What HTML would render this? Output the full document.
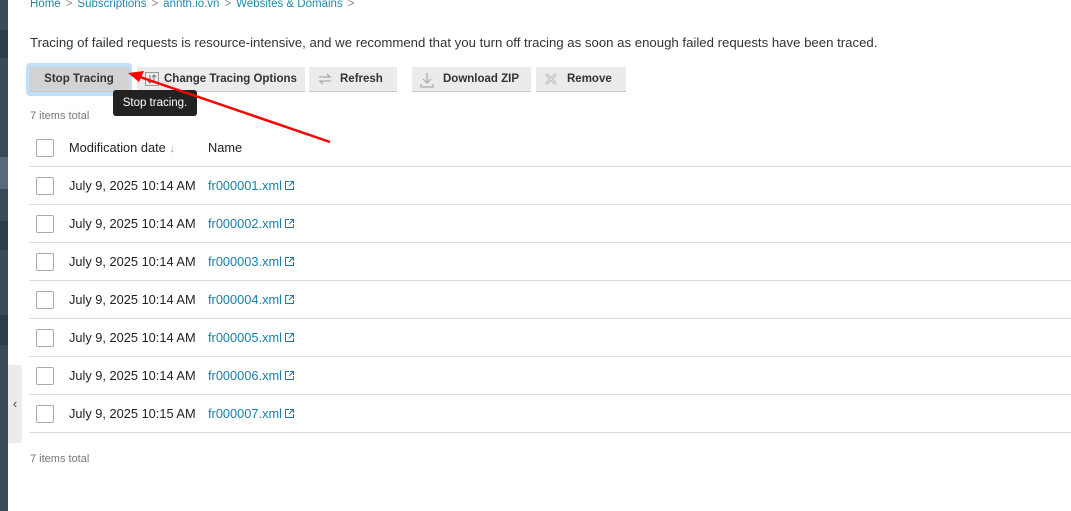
<!DOCTYPE html>
<html><head><meta charset="utf-8"><style>
*{margin:0;padding:0;box-sizing:border-box}
body{width:1071px;height:511px;overflow:hidden;background:#fff;font-family:"Liberation Sans",sans-serif;color:#222;position:relative}
.a{position:absolute;white-space:nowrap}
.sb{position:absolute;left:0;width:8px}
.bc{top:-2px;left:30px;font-size:11.5px;color:#28a;}
.bc span{color:#888;margin:0 5px}
.btn{position:absolute;top:67px;height:25px;background:#ebebeb;border-bottom:1px solid #c8c8c8;font-size:11.5px;font-weight:bold;color:#333;line-height:25px;padding-left:10px}
.btn svg{position:absolute;left:8px;top:5px}
.row{position:absolute;left:29px;width:1042px;height:38px;border-bottom:1px solid #ddd}
.cb{position:absolute;left:7px;top:10px;width:18px;height:18px;border:1px solid #aaa;border-radius:2px;background:#fff}
.d{position:absolute;left:40px;top:11px;font-size:12.8px;color:#222}
.n{position:absolute;left:179px;top:11px;font-size:12.8px;color:#1a7ea8}
.n svg{vertical-align:-1px;margin-left:2px}
</style></head><body>
<div class="sb" style="top:0;height:30px;background:#3a4a5a"></div>
<div class="sb" style="top:30px;height:28px;background:#2e3b48"></div>
<div class="sb" style="top:58px;height:99px;background:#3a4a5a"></div>
<div class="sb" style="top:157px;height:32px;background:#566a7c"></div>
<div class="sb" style="top:189px;height:32px;background:#3a4a5a"></div>
<div class="sb" style="top:221px;height:29px;background:#2e3b48"></div>
<div class="sb" style="top:250px;height:65px;background:#3a4a5a"></div>
<div class="sb" style="top:315px;height:30px;background:#2e3b48"></div>
<div class="sb" style="top:345px;height:166px;background:#3a4a5a"></div>
<div class="a" style="left:8px;top:365px;width:14px;height:78px;background:#ebebeb;border-radius:0 3px 3px 0;font-size:13px;color:#444;line-height:78px;text-align:center">‹</div>

<div class="a bc">Home<span>&gt;</span>Subscriptions<span>&gt;</span>annth.io.vn<span>&gt;</span>Websites &amp; Domains<span>&gt;</span></div>
<div class="a" style="left:30px;top:35px;font-size:13.2px;color:#333">Tracing of failed requests is resource-intensive, and we recommend that you turn off tracing as soon as enough failed requests have been traced.</div>

<div class="a" style="left:26px;top:63px;width:106px;height:33px;border-radius:4px;background:#bfe0fb"></div>
<div class="btn" style="left:29px;width:100px;background:#d2d2d2;text-align:center;padding:0">Stop Tracing</div>
<div class="btn" style="left:137px;width:168px;padding-left:27px"><svg width="14" height="14"><rect x="0.5" y="0.5" width="13" height="13" fill="none" stroke="#999"/><path d="M5 3v8M3 9l2 2 2-2M9 11V3M7 5l2-2 2 2" stroke="#777" fill="none"/></svg>Change Tracing Options</div>
<div class="btn" style="left:309px;width:88px;padding-left:31px"><svg width="16" height="14"><path d="M2 5h11l-3-3M14 9H3l3 3" stroke="#aaa" fill="none" stroke-width="1.3"/></svg>Refresh</div>
<div class="btn" style="left:412px;width:119px;padding-left:31px"><svg width="14" height="16"><path d="M7 1v10M3 7l4 4 4-4M1 12v3h12v-3" stroke="#aaa" fill="none" stroke-width="1.2"/></svg>Download ZIP</div>
<div class="btn" style="left:536px;width:90px;padding-left:31px"><svg width="14" height="14"><path d="M2 2l10 10M12 2L2 12" stroke="#aaa" stroke-width="2.5"/><path d="M2 2l10 10M12 2L2 12" stroke="#eee" stroke-width="1"/></svg>Remove</div>

<div class="a" style="left:113px;top:90px;width:84px;height:26px;background:#222;border-radius:3px;color:#fff;font-size:11.5px;line-height:26px;text-align:center">Stop tracing.</div>

<div class="a" style="left:30px;top:110px;font-size:11px;color:#777">7 items total</div>

<div class="row" style="top:129px"><div class="cb"></div><div class="d">Modification date <span style="color:#999;font-size:11px">↓</span></div><div class="d" style="left:179px">Name</div></div>
<div class="row" style="top:167px"><div class="cb"></div><div class="d">July 9, 2025 10:14 AM</div><div class="n">fr000001.xml<svg width="11" height="11"><path d="M5 1.5H1.5v8h8V6M6 1.5h3.5V5M9.5 1.5L5 6" stroke="#1a7ea8" fill="none"/></svg></div></div>
<div class="row" style="top:205px"><div class="cb"></div><div class="d">July 9, 2025 10:14 AM</div><div class="n">fr000002.xml<svg width="11" height="11"><path d="M5 1.5H1.5v8h8V6M6 1.5h3.5V5M9.5 1.5L5 6" stroke="#1a7ea8" fill="none"/></svg></div></div>
<div class="row" style="top:243px"><div class="cb"></div><div class="d">July 9, 2025 10:14 AM</div><div class="n">fr000003.xml<svg width="11" height="11"><path d="M5 1.5H1.5v8h8V6M6 1.5h3.5V5M9.5 1.5L5 6" stroke="#1a7ea8" fill="none"/></svg></div></div>
<div class="row" style="top:281px"><div class="cb"></div><div class="d">July 9, 2025 10:14 AM</div><div class="n">fr000004.xml<svg width="11" height="11"><path d="M5 1.5H1.5v8h8V6M6 1.5h3.5V5M9.5 1.5L5 6" stroke="#1a7ea8" fill="none"/></svg></div></div>
<div class="row" style="top:319px"><div class="cb"></div><div class="d">July 9, 2025 10:14 AM</div><div class="n">fr000005.xml<svg width="11" height="11"><path d="M5 1.5H1.5v8h8V6M6 1.5h3.5V5M9.5 1.5L5 6" stroke="#1a7ea8" fill="none"/></svg></div></div>
<div class="row" style="top:357px"><div class="cb"></div><div class="d">July 9, 2025 10:14 AM</div><div class="n">fr000006.xml<svg width="11" height="11"><path d="M5 1.5H1.5v8h8V6M6 1.5h3.5V5M9.5 1.5L5 6" stroke="#1a7ea8" fill="none"/></svg></div></div>
<div class="row" style="top:395px"><div class="cb"></div><div class="d">July 9, 2025 10:15 AM</div><div class="n">fr000007.xml<svg width="11" height="11"><path d="M5 1.5H1.5v8h8V6M6 1.5h3.5V5M9.5 1.5L5 6" stroke="#1a7ea8" fill="none"/></svg></div></div>
<div class="a" style="left:30px;top:453px;font-size:11px;color:#777">7 items total</div>

<svg class="a" style="left:0;top:0" width="1071" height="511"><line x1="330" y1="142" x2="140" y2="77" stroke="#f00" stroke-width="2.5"/><path d="M128 73l16-2-5 11z" fill="#f00"/></svg>
</body></html>
